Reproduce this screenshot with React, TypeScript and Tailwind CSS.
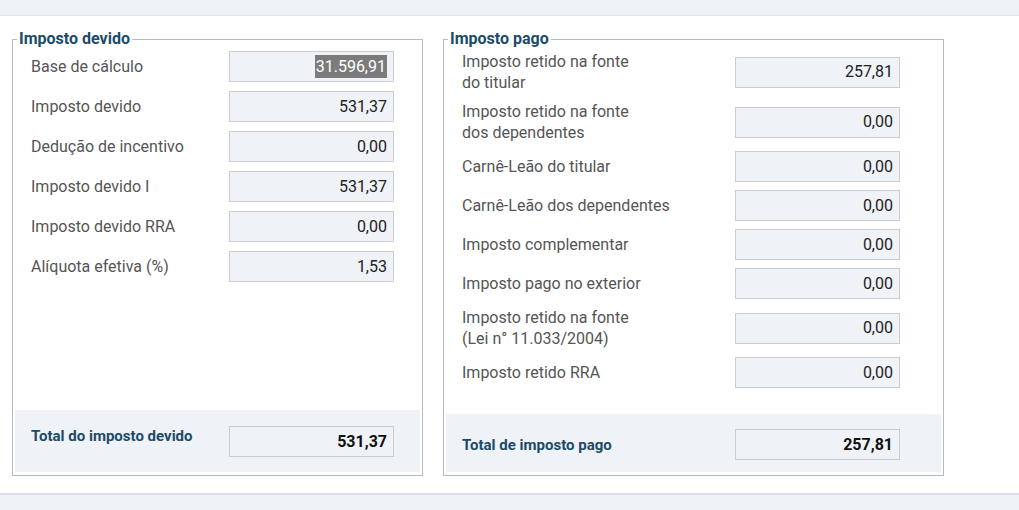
import React from "react"

type Row = { label: string[]; value: string; selected?: boolean }

const devido: Row[] = [
  { label: ["Base de cálculo"], value: "31.596,91", selected: true },
  { label: ["Imposto devido"], value: "531,37" },
  { label: ["Dedução de incentivo"], value: "0,00" },
  { label: ["Imposto devido I"], value: "531,37" },
  { label: ["Imposto devido RRA"], value: "0,00" },
  { label: ["Alíquota efetiva (%)"], value: "1,53" },
]

const pago: Row[] = [
  { label: ["Imposto retido na fonte", "do titular"], value: "257,81" },
  { label: ["Imposto retido na fonte", "dos dependentes"], value: "0,00" },
  { label: ["Carnê-Leão do titular"], value: "0,00" },
  { label: ["Carnê-Leão dos dependentes"], value: "0,00" },
  { label: ["Imposto complementar"], value: "0,00" },
  { label: ["Imposto pago no exterior"], value: "0,00" },
  { label: ["Imposto retido na fonte", "(Lei n° 11.033/2004)"], value: "0,00" },
  { label: ["Imposto retido RRA"], value: "0,00" },
]

function ValueBox({ value, selected, bold }: { value: string; selected?: boolean; bold?: boolean }) {
  return (
    <div
      className={
        "flex h-[31px] w-[165px] shrink-0 items-center justify-end border border-[#c9cdd2] bg-[#eff2f7] pr-[6px] " +
        (bold ? "text-[16px] font-bold text-[#111]" : "text-[16px] text-[#222]")
      }
    >
      {selected ? (
        <span className="bg-[#7b7b7b] px-[1px] leading-[23px] text-white">{value}</span>
      ) : (
        value
      )}
    </div>
  )
}

function Field({ row, labelWidth }: { row: Row; labelWidth: string }) {
  const twoLines = row.label.length > 1
  return (
    <div className={"flex items-center " + (twoLines ? "h-[42px]" : "h-[31px]")}>
      <div className={"shrink-0 whitespace-nowrap text-[16px] leading-[21px] text-[#555] " + labelWidth}>
        {row.label.map((l) => (
          <div key={l}>{l}</div>
        ))}
      </div>
      <ValueBox value={row.value} selected={row.selected} />
    </div>
  )
}

export default function App() {
  return (
    <div className="flex h-[510px] w-[1019px] flex-col bg-white font-['Roboto','Liberation_Sans',sans-serif]">
      <div className="h-[16px] border-b border-[#e2e6eb] bg-[#eff2f7]" />

      <div className="mt-[14px] flex items-stretch gap-[20px] pl-[12px]">
        {/* Imposto devido */}
        <fieldset className="flex w-[411px] flex-col border border-[#b3bbc2] px-[2px] pb-[3px]">
          <legend className="ml-[2px] px-[2px] text-[16px] font-bold leading-[18px] text-[#1a4c6c]">
            Imposto devido
          </legend>
          <div className="flex flex-1 flex-col">
            <div className="mt-[3px] flex flex-col gap-[9px] pl-[16px]">
              {devido.map((r) => (
                <Field key={r.label[0] + r.value} row={r} labelWidth="w-[198px]" />
              ))}
            </div>
            <div className="mt-auto flex h-[62px] items-start bg-[#eff2f7] pl-[16px] pt-[16px]">
              <div className="w-[198px] shrink-0 whitespace-nowrap text-[15px] font-bold leading-[20px] text-[#1c4b69]">
                Total do imposto devido
              </div>
              <ValueBox value="531,37" bold />
            </div>
          </div>
        </fieldset>

        {/* Imposto pago */}
        <fieldset className="flex w-[501px] flex-col border border-[#b3bbc2] px-[2px] pb-[3px]">
          <legend className="ml-[2px] px-[2px] text-[16px] font-bold leading-[18px] text-[#1a4c6c]">
            Imposto pago
          </legend>
          <div className="flex flex-1 flex-col">
            <div className="mt-[3px] flex flex-col gap-[8px] pl-[16px]">
              {pago.map((r) => (
                <Field key={r.label.join(" ")} row={r} labelWidth="w-[273px]" />
              ))}
            </div>
            <div className="mt-[26px] flex h-[58px] items-start bg-[#eff2f7] pl-[16px] pt-[15px]">
              <div className="mt-[6px] w-[273px] shrink-0 whitespace-nowrap text-[15px] font-bold leading-[20px] text-[#1c4b69]">
                Total de imposto pago
              </div>
              <ValueBox value="257,81" bold />
            </div>
          </div>
        </fieldset>
      </div>

      <div className="mt-auto h-[17px] border-t-2 border-[#d9dfe7] bg-[#eff2f7]" />
    </div>
  )
}
